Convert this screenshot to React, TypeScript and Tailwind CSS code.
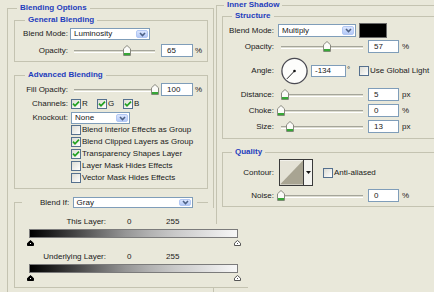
import type { ReactNode } from "react";

function Legend({ children, className }: { children: ReactNode; className: string }) {
  return (
    <span
      className={`absolute -top-[7px] px-[3px] bg-[#e9e8da] text-[8px] leading-[12px] font-bold text-[#1f3dbd] whitespace-nowrap ${className}`}
    >
      {children}
    </span>
  );
}

function Select({ value, className }: { value: string; className: string }) {
  return (
    <div className={`flex items-stretch bg-white border border-[#7f9db9] ${className}`}>
      <span className="flex-1 flex items-center pl-[3px]">{value}</span>
      <span className="my-[1px] mr-[1px] w-[12px] rounded-[2px] border border-[#b3c8f4] bg-gradient-to-b from-[#dbe6fe] to-[#b4c9f7] flex items-center justify-center">
        <svg width="7" height="5" viewBox="0 0 7 5">
          <path d="M1 1 L3.5 3.6 L6 1" fill="none" stroke="#4d6185" strokeWidth="1.5" />
        </svg>
      </span>
    </div>
  );
}

function Field({ value, className }: { value: string; className: string }) {
  return (
    <div className={`flex items-center bg-white border border-[#7f9db9] ${className}`}>{value}</div>
  );
}

function Check({ checked }: { checked?: boolean }) {
  return (
    <span className="w-[10px] h-[10px] shrink-0 border border-[#55708e] bg-gradient-to-br from-[#dcdcd4] to-white flex items-center justify-center">
      {checked && (
        <svg width="8" height="8" viewBox="0 0 8 8">
          <path d="M1 3.6 L3 5.8 L7 1.6" fill="none" stroke="#21a121" strokeWidth="1.7" />
        </svg>
      )}
    </span>
  );
}

function Slider({ className, pos }: { className: string; pos: number }) {
  return (
    <div className={`relative h-[11px] ${className}`}>
      <div className="absolute left-0 right-0 top-[5px] h-[3px] border-t border-[#a5a59a] border-b border-b-white bg-[#dcdcd0]" />
      <svg
        className="absolute top-0"
        style={{ left: pos - 4 }}
        width="8"
        height="11"
        viewBox="0 0 8 11"
      >
        <path d="M0.5 10.5 V3.8 L4 0.5 L7.5 3.8 V10.5 Z" fill="#fbfbf8" stroke="#8a8a80" />
        <rect x="1" y="8" width="6" height="2.2" fill="#37a637" />
      </svg>
    </div>
  );
}

function Stop({ dark }: { dark?: boolean }) {
  return (
    <svg width="7" height="6" viewBox="0 0 7 6">
      <path
        d="M3.5 0.5 L6.5 3.2 V5.5 H0.5 V3.2 Z"
        fill={dark ? "#000" : "#fff"}
        stroke={dark ? "#000" : "#555"}
      />
      {dark && <rect x="3" y="3" width="1" height="1" fill="#fff" />}
      {!dark && <rect x="3" y="3" width="1" height="1" fill="#555" />}
    </svg>
  );
}

const RAMP =
  "w-[209px] h-[9px] border border-[#7b7b7b] bg-[linear-gradient(to_right,#000_0%,#1e1e1e_10%,#454545_22%,#6e6e6e_34%,#959595_46%,#b2b2b2_58%,#c9c9c9_70%,#dedede_84%,#f7f7f7_100%)]";

export default function App() {
  return (
    <div className="w-[434px] h-[292px] overflow-hidden bg-[#e9e8da] flex text-[8px] leading-[10px] text-[#202020] font-['Liberation_Sans',Arial,sans-serif]">
      {/* Blending Options */}
      <div className="w-[216px] shrink-0">
        <div className="relative ml-[7px] mt-[8px] w-[207px] h-[300px] border-l border-t border-r border-[#c4c3b1]">
          <Legend className="left-[9px]">Blending Options</Legend>
          <div className="flex flex-col pt-[11px] pl-[6px]">
            {/* General Blending */}
            <div className="relative w-[194px] h-[42px] border border-[#c4c3b1] pt-[7px]">
              <Legend className="left-[10px]">General Blending</Legend>
              <div className="flex items-center h-[12px]">
                <span className="w-[53px] text-right">Blend Mode:</span>
                <Select value="Luminosity" className="ml-[2px] w-[80px] h-[12px]" />
              </div>
              <div className="flex items-center h-[13px] mt-[4px]">
                <span className="w-[53px] text-right">Opacity:</span>
                <Slider className="ml-[6px] w-[81px]" pos={53} />
                <Field value="65" className="ml-[6px] w-[32px] h-[13px] pl-[5px]" />
                <span className="ml-[2px]">%</span>
              </div>
            </div>

            {/* Advanced Blending */}
            <div className="relative mt-[13px] w-[194px] h-[114px] border border-[#c4c3b1] pt-[7px]">
              <Legend className="left-[10px]">Advanced Blending</Legend>
              <div className="flex items-center h-[13px]">
                <span className="w-[53px] text-right">Fill Opacity:</span>
                <Slider className="ml-[6px] w-[81px]" pos={81} />
                <Field value="100" className="ml-[6px] w-[32px] h-[13px] pl-[5px]" />
                <span className="ml-[2px]">%</span>
              </div>
              <div className="flex items-center h-[11px] mt-[2px]">
                <span className="w-[53px] text-right">Channels:</span>
                <div className="ml-[3px] flex">
                  <span className="w-[26px] flex items-center">
                    <Check checked />
                    <span className="ml-[1px]">R</span>
                  </span>
                  <span className="w-[26px] flex items-center">
                    <Check checked />
                    <span className="ml-[1px]">G</span>
                  </span>
                  <span className="w-[26px] flex items-center">
                    <Check checked />
                    <span className="ml-[1px]">B</span>
                  </span>
                </div>
              </div>
              <div className="flex items-center h-[12px] mt-[3px]">
                <span className="w-[53px] text-right">Knockout:</span>
                <Select value="None" className="ml-[3px] w-[59px] h-[12px]" />
              </div>
              <div className="flex flex-col pl-[56px]">
                <div className="flex items-center h-[12px]">
                  <Check />
                  <span className="ml-[1px]">Blend Interior Effects as Group</span>
                </div>
                <div className="flex items-center h-[12px]">
                  <Check checked />
                  <span className="ml-[1px]">Blend Clipped Layers as Group</span>
                </div>
                <div className="flex items-center h-[12px]">
                  <Check checked />
                  <span className="ml-[1px]">Transparency Shapes Layer</span>
                </div>
                <div className="flex items-center h-[12px]">
                  <Check />
                  <span className="ml-[1px]">Layer Mask Hides Effects</span>
                </div>
                <div className="flex items-center h-[12px]">
                  <Check />
                  <span className="ml-[1px]">Vector Mask Hides Effects</span>
                </div>
              </div>
            </div>

            {/* Blend If */}
            <div className="mt-[8px] flex items-center h-[11px] w-[194px]">
              <span className="self-end w-[8px] h-[6px] border-l border-t border-[#c4c3b1]" />
              <span className="ml-[18px] w-[30px]">Blend If:</span>
              <Select value="Gray" className="ml-[3px] w-[122px] h-[11px]" />
              <span className="ml-[4px] w-[11px] border-t border-[#c4c3b1]" />
            </div>
            <div className="w-[234px] h-[80px] border-l border-b border-[#c4c3b1] bg-[#e9e8da] pt-[9px]">
              <div className="flex items-center h-[10px]">
                <span className="w-[91px] text-right">This Layer:</span>
                <span className="ml-[21px] w-[39px]">0</span>
                <span>255</span>
              </div>
              <div className={`ml-[14px] mt-[2px] ${RAMP}`} />
              <div className="ml-[12px] mt-[2px] w-[214px] h-[6px] flex justify-between">
                <Stop dark />
                <Stop />
              </div>
              <div className="flex items-center h-[10px] mt-[6px]">
                <span className="w-[91px] text-right">Underlying Layer:</span>
                <span className="ml-[21px] w-[39px]">0</span>
                <span>255</span>
              </div>
              <div className={`ml-[14px] mt-[2px] ${RAMP}`} />
              <div className="ml-[12px] mt-[2px] w-[214px] h-[6px] flex justify-between">
                <Stop dark />
                <Stop />
              </div>
            </div>
          </div>
        </div>
      </div>

      {/* Inner Shadow */}
      <div className="shrink-0">
        <div className="relative mt-[5px] w-[240px] h-[219px] border-l border-t border-[#c4c3b1]">
          <Legend className="left-[7px]">Inner Shadow</Legend>
          <div className="flex flex-col pl-[5px] pt-[10px]">
            {/* Structure */}
            <div className="relative w-[230px] h-[123px] border border-[#c4c3b1] pt-[6px]">
              <Legend className="left-[9px]">Structure</Legend>
              <div className="flex items-center h-[15px]">
                <span className="w-[51px] text-right">Blend Mode:</span>
                <Select value="Multiply" className="ml-[4px] w-[78px] h-[13px]" />
                <span className="ml-[3px] w-[28px] h-[15px] bg-black border border-[#6a6a6a]" />
              </div>
              <div className="flex items-center h-[13px] mt-[2px]">
                <span className="w-[51px] text-right">Opacity:</span>
                <Slider className="ml-[7px] w-[82px]" pos={46} />
                <Field value="57" className="ml-[5px] w-[31px] h-[13px] pl-[5px]" />
                <span className="ml-[3px]">%</span>
              </div>
              <div className="flex items-center h-[28px] mt-[4px]">
                <span className="w-[51px] text-right">Angle:</span>
                <svg className="ml-[7px]" width="27" height="28" viewBox="0 0 27 28">
                  <circle cx="13.5" cy="14" r="12.6" fill="#fdfdfb" stroke="#4a4a52" strokeWidth="1.3" />
                  <line x1="13.5" y1="14" x2="5.9" y2="21.9" stroke="#2a2a2a" strokeWidth="1" />
                  <circle cx="13.5" cy="14" r="1.3" fill="#111" />
                </svg>
                <Field value="-134" className="ml-[3px] w-[35px] h-[12px] pl-[3px]" />
                <span className="w-[13px] pl-[1px] self-start mt-[8px]">°</span>
                <Check />
                <span className="ml-[1px]">Use Global Light</span>
              </div>
              <div className="flex items-center h-[13px] mt-[3px]">
                <span className="w-[51px] text-right">Distance:</span>
                <Slider className="ml-[7px] w-[82px]" pos={4} />
                <Field value="5" className="ml-[5px] w-[31px] h-[13px] pl-[5px]" />
                <span className="ml-[3px]">px</span>
              </div>
              <div className="flex items-center h-[13px] mt-[3px]">
                <span className="w-[51px] text-right">Choke:</span>
                <Slider className="ml-[7px] w-[82px]" pos={0} />
                <Field value="0" className="ml-[5px] w-[31px] h-[13px] pl-[5px]" />
                <span className="ml-[3px]">%</span>
              </div>
              <div className="flex items-center h-[13px] mt-[3px]">
                <span className="w-[51px] text-right">Size:</span>
                <Slider className="ml-[7px] w-[82px]" pos={9} />
                <Field value="13" className="ml-[5px] w-[31px] h-[13px] pl-[5px]" />
                <span className="ml-[3px]">px</span>
              </div>
            </div>

            {/* Quality */}
            <div className="relative mt-[13px] w-[230px] h-[55px] border border-[#c4c3b1] pt-[6px]">
              <Legend className="left-[9px]">Quality</Legend>
              <div className="flex items-center h-[27px]">
                <span className="w-[51px] text-right">Contour:</span>
                <div className="ml-[5px] w-[34px] h-[27px] flex border border-[#3a3a3a] bg-white">
                  <svg width="24" height="25" viewBox="0 0 24 25" className="border-r border-[#3a3a3a]">
                    <rect x="0" y="0" width="24" height="25" fill="#e4e2d6" />
                    <path d="M0 25 L24 0 V25 Z" fill="#a8a492" />
                  </svg>
                  <span className="flex-1 flex items-center justify-center bg-[#f4f4f0]">
                    <svg width="5" height="3" viewBox="0 0 5 3">
                      <path d="M0 0 H5 L2.5 3 Z" fill="#111" />
                    </svg>
                  </span>
                </div>
                <span className="ml-[10px]">
                  <Check />
                </span>
                <span className="ml-[1px]">Anti-aliased</span>
              </div>
              <div className="flex items-center h-[13px] mt-[3px]">
                <span className="w-[51px] text-right">Noise:</span>
                <Slider className="ml-[7px] w-[82px]" pos={0} />
                <Field value="0" className="ml-[5px] w-[31px] h-[13px] pl-[5px]" />
                <span className="ml-[3px]">%</span>
              </div>
            </div>
          </div>
        </div>
      </div>
    </div>
  );
}
